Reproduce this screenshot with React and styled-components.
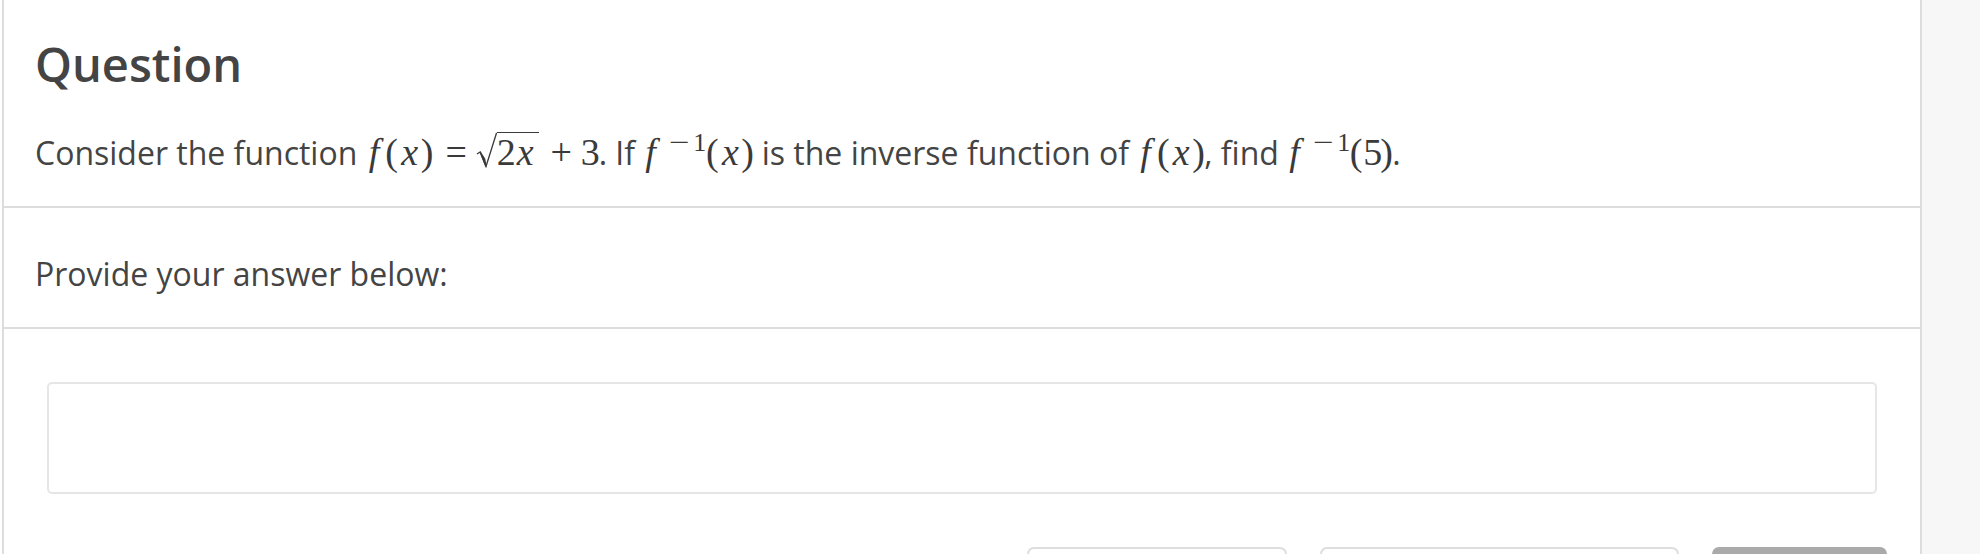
import React from 'react'
import styled, { createGlobalStyle } from 'styled-components'

const GlobalStyle = createGlobalStyle`
    html, body {
        margin: 0;
        padding: 0;
        background: #f7f7f7;
    }
    body {
        font-family: "Open Sans", "Noto Sans", sans-serif;
        color: #444;
    }
`;

const Page = styled.div`
    display: flex;
    min-height: 100vh;
`;

const Main = styled.main`
    flex: none;
    width: 1922px;
    padding-left: 2px;
    box-sizing: border-box;
    background: #fff;
`;

const Side = styled.aside`
    flex: 1;
    background: #f7f7f7;
`;

const Card = styled.div`
    background: #fff;
    border: 2px solid #ddd;
    border-top: 0;
    min-height: 100vh;
`;

const Section = styled.section`
    padding: ${p => p.pad};
    border-bottom: ${p => (p.last ? '0' : '2px solid #ddd')};
`;

const Heading = styled.h2`
    margin: 0 0 35px;
    font-size: 47px;
    line-height: 57.6px;
    font-weight: 600;
    color: #444;
`;

const Text = styled.p`
    margin: 0;
    font-size: 32px;
    line-height: 47px;
    color: #444;
    white-space: nowrap;
`;

const Math = styled.span`
    font-family: "Liberation Serif", "Times New Roman", serif;
    font-size: 38px;
    line-height: 1;
    color: #3a3a3a;
    white-space: nowrap;
`;

// one math glyph in a box of fixed width, like a TeX char box
const G = styled.span`
    display: inline-block;
    width: ${p => p.w}px;
    margin-left: ${p => p.ml || 0}px;
    margin-right: ${p => p.mr || 0}px;
    text-align: ${p => p.align || 'center'};
    font-style: ${p => (p.i ? 'italic' : 'normal')};
`;

const Sup = styled.span`
    display: inline-block;
    margin-left: 1px;
    font-size: 26px;
    vertical-align: 14px;
`;

const Minus = styled.span`
    display: inline-block;
    width: 27px;
    text-align: center;
    transform: scaleX(1.4);
`;

const Radical = styled.svg`
    display: inline-block;
    width: 21px;
    height: 36px;
    vertical-align: -3px;
`;

const Radicand = styled.span`
    display: inline-block;
    border-top: 1.5px solid #3a3a3a;
    padding-top: 0;
    padding-right: 4px;
`;

const AnswerBox = styled.textarea`
    display: block;
    box-sizing: border-box;
    width: calc(100% - 20px);
    height: 112px;
    margin: 0 10px;
    border: 2px solid #e6e6e6;
    border-radius: 5px;
    background: #fff;
    resize: none;
    outline: none;
    font: inherit;
`;

const Actions = styled.div`
    display: flex;
    justify-content: flex-end;
    gap: 33px;
    margin-top: 53px;
`;

const Button = styled.button`
    box-sizing: border-box;
    width: ${p => p.w}px;
    height: 54px;
    border: 2px solid ${p => (p.primary ? '#aaa' : '#ddd')};
    border-radius: 7px;
    background: ${p => (p.primary ? '#aaa' : '#fff')};
    color: ${p => (p.primary ? '#fff' : '#444')};
    font-family: "Open Sans", sans-serif;
    font-size: 28px;
`;

const F = ({ inv }) => (
    <>
        <G i w={inv ? 20 : 16} align="left" ml={inv ? 2 : 3}>f</G>
        {inv && (
            <Sup>
                <Minus>−</Minus>
                <G w={12}>1</G>
            </Sup>
        )}
    </>
);

const Paren = ({ children, i }) => (
    <>
        <G w={14}>(</G>
        <G i={i} w={i ? 22 : 17}>{children}</G>
        <G w={12}>)</G>
    </>
);

const Root = () => (
    <>
        <Radical viewBox="0 0 21 36">
            <path d="M1 22 L4.2 20 L10 34.5 L20.6 0.8" fill="none" stroke="#3a3a3a" strokeWidth="1.3" />
            <path d="M4.2 20 L10 34.5 L8.6 27 Z" fill="#3a3a3a" stroke="#3a3a3a" strokeWidth="1.4" />
        </Radical>
        <Radicand>
            <G w={19}>2</G>
            <G i w={19}>x</G>
        </Radicand>
    </>
);

export default function App() {
    return (
        <Page>
            <GlobalStyle />
            <Main>
                <Card>
                    <Section pad="36px 33px 30px 31px">
                        <Heading>Question</Heading>
                        <Text>
                            Consider the function{' '}
                            <Math>
                                <F />
                                <Paren i>x</Paren>
                                <G w={27} ml={10} mr={6}>=</G>
                                <Root />
                                <G w={27} ml={9} mr={6}>+</G>
                                <G w={18}>3</G>
                            </Math>
                            . If{' '}
                            <Math>
                                <F inv />
                                <Paren i>x</Paren>
                            </Math>{' '}
                            is the inverse function of{' '}
                            <Math>
                                <F />
                                <Paren i>x</Paren>
                            </Math>
                            , find{' '}
                            <Math>
                                <F inv />
                                <Paren>5</Paren>
                            </Math>
                            .
                        </Text>
                    </Section>
                    <Section pad="42px 33px 30px 31px">
                        <Text>Provide your answer below:</Text>
                    </Section>
                    <Section last pad="53px 33px 0">
                        <AnswerBox aria-label="Answer" />
                        <Actions>
                            <Button w={260}>Skip</Button>
                            <Button w={359}>Save for later</Button>
                            <Button w={175} primary>Submit</Button>
                        </Actions>
                    </Section>
                </Card>
            </Main>
            <Side />
        </Page>
    );
}
